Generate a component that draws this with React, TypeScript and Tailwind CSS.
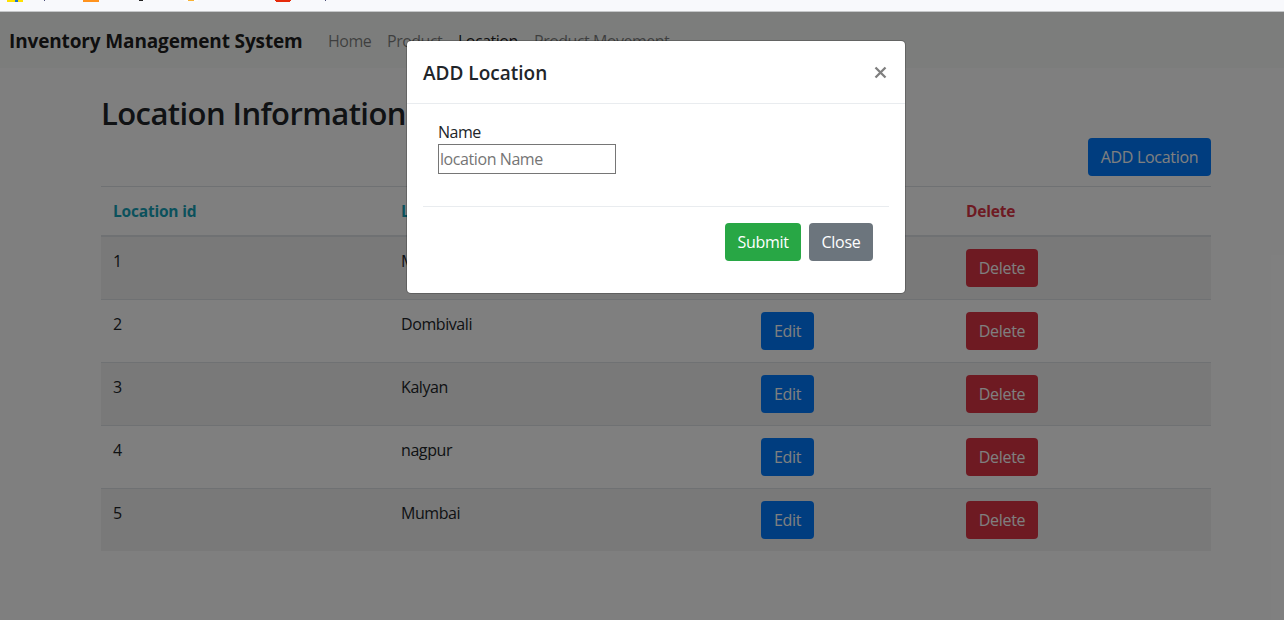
import type { ReactNode } from "react";

const rows = [
  { id: 1, name: "Mulund" },
  { id: 2, name: "Dombivali" },
  { id: 3, name: "Kalyan" },
  { id: 4, name: "nagpur" },
  { id: 5, name: "Mumbai" },
];

function Btn({ className, children }: { className: string; children: ReactNode }) {
  return (
    <button className={`flex h-[38px] items-center justify-center rounded-[4px] tracking-[-0.3px] text-white ${className}`}>
      <span className="whitespace-nowrap">{children}</span>
    </button>
  );
}

function Bookmarks() {
  return (
    <svg className="block" width="1284" height="11" viewBox="0 0 1284 11" shapeRendering="crispEdges">
      <rect x="7" y="0" width="16" height="2" fill="#ffe100" />
      <rect x="15" y="0" width="3" height="2" fill="#1a73c8" />
      <rect x="44" y="0" width="1" height="1" fill="#4a4d78" />
      <rect x="83" y="0" width="16" height="2" fill="#ff931e" />
      <rect x="139" y="0" width="4" height="1" fill="#222222" />
      <rect x="184" y="0" width="14" height="1" fill="#ffffff" />
      <rect x="188" y="0" width="6" height="1" fill="#f9b233" />
      <rect x="275" y="0" width="16" height="1" fill="#e62b0b" />
      <rect x="276" y="1" width="14" height="1" fill="#e62b0b" />
      <rect x="325" y="0" width="1" height="1" fill="#4a4d78" />
    </svg>
  );
}

function Table() {
  return (
    <table className="mt-[10px] w-[1110px] table-fixed border-separate border-spacing-0 text-left">
      <colgroup>
        <col className="w-[288px]" />
        <col className="w-[360px]" />
        <col className="w-[205px]" />
        <col className="w-[257px]" />
      </colgroup>
      <thead>
        <tr className="[&>th]:h-[51px] [&>th]:border-t [&>th]:border-b-2 [&>th]:border-[#dee2e6] [&>th]:px-3 [&>th]:text-[15.5px] [&>th]:font-bold [&>th]:tracking-[-0.2px]">
          <th className="text-[#17a2b8]">Location id</th>
          <th className="text-[#17a2b8]">Location Name</th>
          <th className="text-[#007bff]">Edit</th>
          <th className="text-[#dc3545]">Delete</th>
        </tr>
      </thead>
      <tbody>
        {rows.map((r) => (
          <tr
            key={r.id}
            className="odd:bg-black/5 [&:not(:first-child)>td]:border-t [&>td]:border-[#dee2e6] [&>td]:p-3 [&>td]:align-top"
          >
            <td>{r.id}</td>
            <td className="tracking-[-0.42px]">{r.name}</td>
            <td>
              <Btn className="w-[53px] bg-[#007bff]">Edit</Btn>
            </td>
            <td>
              <Btn className="w-[72px] bg-[#dc3545]">Delete</Btn>
            </td>
          </tr>
        ))}
      </tbody>
    </table>
  );
}

function Modal() {
  return (
    <div className="absolute inset-0 flex items-start justify-center bg-black/50 pl-[28px] pt-[28px]">
      <div className="w-[500px] rounded-[5px] border border-black/20 bg-white bg-clip-padding">
        <div className="flex h-[63px] items-start justify-between border-b border-[#e9ecef] px-4 pt-[17px]">
          <h5 className="text-[19px] leading-[30px] font-semibold tracking-[0px]">ADD Location</h5>
          <svg className="mt-2 mr-[2px]" width="13" height="13" viewBox="0 0 13 13">
            <path d="M1.5 1.5 11.5 11.5M11.5 1.5 1.5 11.5" stroke="#7f7f7f" strokeWidth="2.3" />
          </svg>
        </div>
        <div className="p-4">
          <div className="flex h-[86px] flex-col items-start px-[15px]">
            <label className="h-6 tracking-[-0.5px]">Name</label>
            <input
              placeholder="location Name"
              className="h-[30px] w-[178px] border border-[#767676] bg-white px-px tracking-[-0.42px] placeholder:text-[#757575]"
            />
          </div>
          <div className="flex justify-end gap-2 border-t border-[#e9ecef] p-4">
            <Btn className="w-[76px] bg-[#28a745]">Submit</Btn>
            <Btn className="w-[64px] bg-[#6c757d]">Close</Btn>
          </div>
        </div>
      </div>
    </div>
  );
}

export default function App() {
  return (
    <div className="flex h-[620px] w-[1284px] flex-col overflow-hidden bg-white font-['Open_Sans','Noto_Sans',sans-serif] text-[16px] leading-6 text-[#212529]">
      <div className="h-3 shrink-0 border-b border-[#c5c7c9] bg-[#f8f9fc]">
        <Bookmarks />
      </div>
      <div className="relative flex-1">
        <nav className="flex h-14 items-center bg-[#f8faf9] pt-px pl-[9px]">
          <span className="w-[319px] whitespace-nowrap text-[19px] font-bold tracking-[-0.14px] text-black/90">
            Inventory Management System
          </span>
          <div className="flex whitespace-nowrap tracking-[-0.5px] text-black/50">
            <span className="w-[59px]">Home</span>
            <span className="w-[71px]">Product</span>
            <span className="w-[76px] text-black/90">Location</span>
            <span>Product Movement</span>
          </div>
        </nav>
        <main className="ml-[101px] w-[1110px] pt-[26px]">
          <h2 className="h-[44px] whitespace-nowrap text-[31px] leading-[38px] font-semibold tracking-[-0.58px]">
            Location Information
          </h2>
          <div className="flex justify-end">
            <Btn className="w-[123px] bg-[#007bff]">ADD Location</Btn>
          </div>
          <Table />
        </main>
        <Modal />
      </div>
    </div>
  );
}
